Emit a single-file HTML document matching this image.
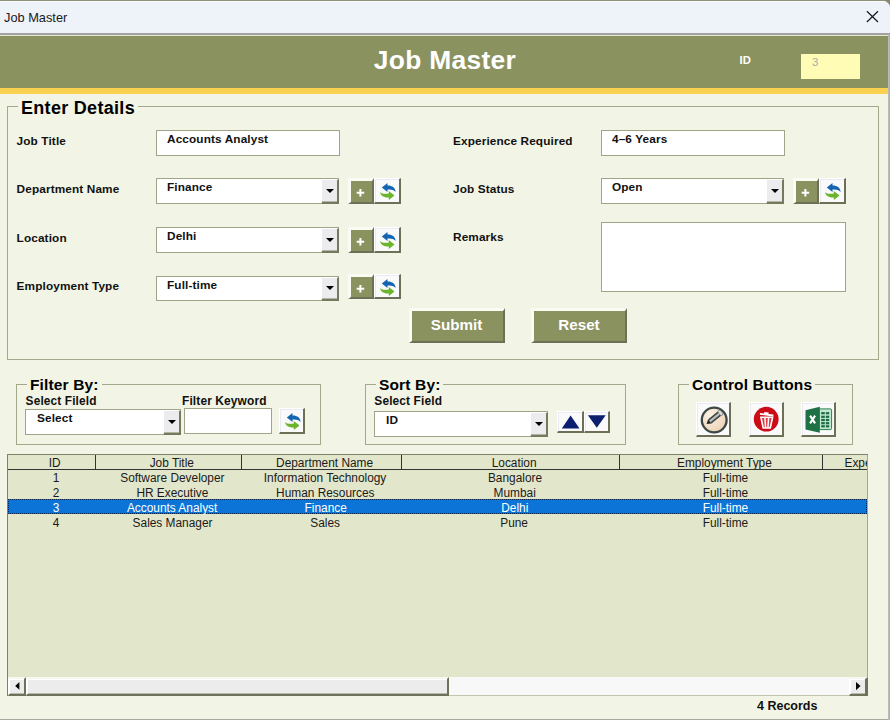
<!DOCTYPE html>
<html><head><meta charset="utf-8">
<style>
*{box-sizing:border-box;margin:0;padding:0}
html,body{width:890px;height:720px;overflow:hidden;background:#f2f4e5;font-family:"Liberation Sans",sans-serif;}
.a{position:absolute}
#titlebar{left:0;top:0;width:890px;height:36px;background:#eef2f9;border-top:1px solid #8d9178;border-bottom:1px solid #e6e8d6;border-top-right-radius:7px;overflow:hidden}
#titlebar:after{content:"";position:absolute;left:0;top:32px;width:890px;height:2px;background:#a2a2a2}
#titlebar:before{content:"";position:absolute;left:0;top:0;width:890px;height:1px;background:#fbfcfe}
#titlebar span{position:absolute;left:4px;top:9px;font-size:12.8px;color:#1a1a1a}
#hdr{left:0;top:36px;width:890px;height:52px;background:#8a9260}
#stripe{left:0;top:88px;width:890px;height:6px;background:#fbd152}
#h1{left:0;top:45px;width:890px;text-align:center;font-weight:bold;font-size:26.4px;color:#fff;letter-spacing:0.3px}
.lbl{font-weight:bold;font-size:11.8px;letter-spacing:0.12px;color:#111;white-space:nowrap}
.frame{border:1px solid #a3a88a}
.cap{letter-spacing:0.15px;background:#f2f4e5;font-weight:bold;color:#000;white-space:nowrap;padding:0 3px}
.tb{background:#fff;border:1px solid #a0a488;font-weight:bold;font-size:11.8px;letter-spacing:0.12px;color:#111;padding:1px 0 0 10px;white-space:nowrap}
.dd{right:-1px;top:0px;bottom:-1px;width:18px;box-shadow:inset 0 -1px 0 #b3b5a4;background:#ececee;border-right:2px solid #77795f;border-bottom:2px solid #77795f;border-left:1px solid #fff;border-top:1px solid #fff}
.dd:after{content:"";position:absolute;left:3.5px;top:9px;border:4px solid transparent;border-top:4px solid #000;border-bottom:0}
.btn{background:#8a9260;border-right:2px solid #6d7056;border-bottom:2px solid #6d7056;border-top:3px solid #fbfbf4;border-left:3px solid #fbfbf4;color:#fff;font-weight:bold;text-align:center}
.ibtn{background:#fafafb;box-shadow:inset 1px 1px 0 #ebe9f4;border-right:2px solid #6d7056;border-bottom:2px solid #6d7056;border-top:1px solid #fff;border-left:1px solid #fff}

#lb{font-size:12.5px;color:#1a1a1a}
#lb .hd{position:absolute;top:0;height:15px;border-right:1px solid #333;border-bottom:1px solid #333;text-align:center;line-height:15px;white-space:nowrap;overflow:hidden}
#lb .c{position:absolute;text-align:center;line-height:15px;height:15px;white-space:nowrap}
#lb .sel{position:absolute;left:0;top:44px;width:859px;height:15px;background:#0b74d6;outline:1px dotted #0c2550;outline-offset:-1px}
.sb{background:#ececec;border-top:2px solid #f7f8f0;border-left:1px solid #fff;border-right:2px solid #6f715a;border-bottom:2px solid #6f715a;box-shadow:inset 1px 1px 0 #fff,inset 0 -1px 0 #b9baaa}
#lb span{display:inline-block;transform:translateX(3.5px) scaleX(0.95)}
#lb .hd span{transform:translate(3.5px,1px) scaleX(0.95)}
.dd8:after{top:8px}
</style></head><body>
<div class="a" style="left:870px;top:0;width:20px;height:10px;background:#85876f"></div>
<div class="a" id="titlebar"><span>Job Master</span>
<svg class="a" style="left:866px;top:10px" width="13" height="12" viewBox="0 0 13 12"><path d="M0.9 0.2L12 11M12 0.2L0.9 11" stroke="#1c1c1c" stroke-width="1.25" fill="none"/></svg></div>
<div class="a" id="hdr"></div><div class="a" id="stripe"></div>
<div class="a" id="h1">Job Master</div>
<div class="a lbl" style="left:739.6px;top:54px;color:#fff;font-size:11.3px">ID</div>
<div class="a" style="left:801px;top:54px;width:59px;height:25px;background:#fffcb6;font-size:11.5px;color:#a9a9a9;padding:2px 0 0 11px">3</div>

<!-- Enter Details frame -->
<div class="a frame" style="left:7px;top:106px;width:872px;height:254px"></div>
<div class="a cap" style="left:18px;top:98px;font-size:18px;letter-spacing:0.3px">Enter Details</div>

<div class="a lbl" style="left:16.6px;top:134px">Job Title</div>
<div class="a tb" style="left:156px;top:130px;width:184px;height:26px">Accounts Analyst</div>
<div class="a lbl" style="left:16.6px;top:182px">Department Name</div>
<div class="a tb" style="left:156px;top:178px;width:183px;height:26px">Finance<div class="a dd"></div></div>
<div class="a lbl" style="left:16.6px;top:231px">Location</div>
<div class="a tb" style="left:156px;top:227px;width:183px;height:26px;padding-top:1px">Delhi<div class="a dd"></div></div>
<div class="a lbl" style="left:16.6px;top:279px">Employment Type</div>
<div class="a tb" style="left:156px;top:276px;width:183px;height:25px;padding-top:1px">Full-time<div class="a dd dd8"></div></div>

<div class="a lbl" style="left:453px;top:134px">Experience Required</div>
<div class="a tb" style="left:601px;top:130px;width:184px;height:26px">4–6 Years</div>
<div class="a lbl" style="left:453px;top:182px">Job Status</div>
<div class="a tb" style="left:601px;top:178px;width:183px;height:26px">Open<div class="a dd"></div></div>
<div class="a lbl" style="left:453px;top:230px">Remarks</div>
<div class="a tb" style="left:601px;top:222px;width:245px;height:70px"></div>

<div class="a btn" style="left:409px;top:308px;width:96px;height:35px;font-size:15.2px;line-height:28px;padding-right:2px">Submit</div>
<div class="a btn" style="left:531px;top:308px;width:96px;height:35px;font-size:15.2px;line-height:28px;padding-right:1px">Reset</div>
<div class="a btn" style="left:348px;top:178px;width:26px;height:26px;font-size:13px;line-height:22px"><svg class="a" style="left:5px;top:7px" width="9" height="9" viewBox="0 0 9 9"><path d="M0.7 3.8H8.2V5.8H0.7ZM3.4 1H5.4V8.5H3.4Z" fill="#fff"/></svg></div><div class="a ibtn" style="left:374px;top:178px;width:27px;height:26px"><svg class="a" style="left:4px;top:2px" width="18" height="20" viewBox="0 0 18 20"><path d="M2.8 6.5L8.5 2V4.6C12.8 4.4 16.2 6.6 16.6 10.9C14.6 8.8 12 8.2 8.5 8.5V11Z" fill="#1565b3"/><path d="M15.5 14.6L9.8 19.1V16.5C5.5 16.7 1.5 15 1 10.9C3 13 6 13 9.8 12.6V10.1Z" fill="#6cb42c"/></svg></div>
<div class="a btn" style="left:348px;top:227px;width:26px;height:26px;font-size:13px;line-height:22px"><svg class="a" style="left:5px;top:7px" width="9" height="9" viewBox="0 0 9 9"><path d="M0.7 3.8H8.2V5.8H0.7ZM3.4 1H5.4V8.5H3.4Z" fill="#fff"/></svg></div><div class="a ibtn" style="left:374px;top:227px;width:27px;height:26px"><svg class="a" style="left:4px;top:2px" width="18" height="20" viewBox="0 0 18 20"><path d="M2.8 6.5L8.5 2V4.6C12.8 4.4 16.2 6.6 16.6 10.9C14.6 8.8 12 8.2 8.5 8.5V11Z" fill="#1565b3"/><path d="M15.5 14.6L9.8 19.1V16.5C5.5 16.7 1.5 15 1 10.9C3 13 6 13 9.8 12.6V10.1Z" fill="#6cb42c"/></svg></div>
<div class="a btn" style="left:348px;top:274px;width:26px;height:25px;font-size:13px;line-height:22px"><svg class="a" style="left:5px;top:7px" width="9" height="9" viewBox="0 0 9 9"><path d="M0.7 3.8H8.2V5.8H0.7ZM3.4 1H5.4V8.5H3.4Z" fill="#fff"/></svg></div><div class="a ibtn" style="left:374px;top:274px;width:27px;height:25px"><svg class="a" style="left:4px;top:2px" width="18" height="20" viewBox="0 0 18 20"><path d="M2.8 6.5L8.5 2V4.6C12.8 4.4 16.2 6.6 16.6 10.9C14.6 8.8 12 8.2 8.5 8.5V11Z" fill="#1565b3"/><path d="M15.5 14.6L9.8 19.1V16.5C5.5 16.7 1.5 15 1 10.9C3 13 6 13 9.8 12.6V10.1Z" fill="#6cb42c"/></svg></div>
<div class="a btn" style="left:793px;top:178px;width:26px;height:26px;font-size:13px;line-height:22px"><svg class="a" style="left:5px;top:7px" width="9" height="9" viewBox="0 0 9 9"><path d="M0.7 3.8H8.2V5.8H0.7ZM3.4 1H5.4V8.5H3.4Z" fill="#fff"/></svg></div><div class="a ibtn" style="left:819px;top:178px;width:27px;height:26px"><svg class="a" style="left:4px;top:2px" width="18" height="20" viewBox="0 0 18 20"><path d="M2.8 6.5L8.5 2V4.6C12.8 4.4 16.2 6.6 16.6 10.9C14.6 8.8 12 8.2 8.5 8.5V11Z" fill="#1565b3"/><path d="M15.5 14.6L9.8 19.1V16.5C5.5 16.7 1.5 15 1 10.9C3 13 6 13 9.8 12.6V10.1Z" fill="#6cb42c"/></svg></div>

<!-- Filter By -->
<div class="a frame" style="left:16px;top:384px;width:305px;height:61px"></div>
<div class="a cap" style="left:27px;top:376px;font-size:15.5px">Filter By:</div>
<div class="a lbl" style="left:25.6px;top:394px;font-size:11.9px">Select Fileld</div>
<div class="a lbl" style="left:182px;top:394px;font-size:11.95px">Filter Keyword</div>
<div class="a tb" style="left:25px;top:409px;width:156px;height:26px;padding-top:1px;padding-left:11px">Select<div class="a dd"></div></div>
<div class="a tb" style="left:184px;top:408px;width:88px;height:26px"></div>
<div class="a ibtn" style="left:279px;top:408px;width:26px;height:26px"><svg class="a" style="left:4px;top:2px" width="18" height="20" viewBox="0 0 18 20"><path d="M2.8 6.5L8.5 2V4.6C12.8 4.4 16.2 6.6 16.6 10.9C14.6 8.8 12 8.2 8.5 8.5V11Z" fill="#1565b3"/><path d="M15.5 14.6L9.8 19.1V16.5C5.5 16.7 1.5 15 1 10.9C3 13 6 13 9.8 12.6V10.1Z" fill="#6cb42c"/></svg></div>
<!-- Sort By -->
<div class="a frame" style="left:365px;top:384px;width:261px;height:61px"></div>
<div class="a cap" style="left:376px;top:376px;font-size:15.5px">Sort By:</div>
<div class="a lbl" style="left:374.3px;top:394px;font-size:11.95px">Select Field</div>
<div class="a tb" style="left:374px;top:411px;width:174px;height:26px;padding-top:1px;padding-left:11px">ID<div class="a dd"></div></div>
<div class="a ibtn" style="left:557px;top:411px;width:27px;height:22px"><svg class="a" style="left:0;top:0" width="24" height="19"><path d="M12.6 3.5L21.5 16.4H3.8Z" fill="#0c1f6e"/></svg></div>
<div class="a ibtn" style="left:584px;top:411px;width:26px;height:22px"><svg class="a" style="left:0;top:0" width="24" height="19"><path d="M2.9 3.2H20.7L11.8 15.7Z" fill="#0c1f6e"/></svg></div>
<!-- Control Buttons -->
<div class="a frame" style="left:678px;top:384px;width:175px;height:61px"></div>
<div class="a cap" style="left:689px;top:376px;font-size:15.5px">Control Buttons</div>
<div class="a ibtn" style="left:696px;top:402px;width:35px;height:35px"><svg class="a" style="left:0;top:1px" width="32" height="31" viewBox="0 0 32 31"><defs><radialGradient id="pg" cx="0.35" cy="0.3" r="0.8"><stop offset="0" stop-color="#fbf1e4"/><stop offset="1" stop-color="#ecd0b2"/></radialGradient></defs><circle cx="17.2" cy="16" r="12.4" fill="url(#pg)" stroke="#3b4844" stroke-width="2.3"/><path d="M9.60 20.00L14.56 19.46L11.17 15.26Z" fill="#262626"/><path d="M14.56 19.46L11.17 15.26L22.90 5.80L26.30 10.00Z" fill="#3f4442"/><path d="M12.87 17.36L24.60 7.90" stroke="#b9bfbe" stroke-width="2.2"/><path d="M20.57 7.68L22.90 5.80L26.30 10.00L23.96 11.89Z" fill="#dcdcdc" stroke="#555" stroke-width="0.5"/></svg></div>
<div class="a ibtn" style="left:749px;top:402px;width:35px;height:35px"><svg class="a" style="left:0;top:1px" width="32" height="31" viewBox="0 0 32 31"><circle cx="16.2" cy="15.2" r="12.4" fill="#cb0b16"/><path d="M9.9 9.9L23.4 11.5M14.2 8.9L18.6 9.4" stroke="#fff" stroke-width="1.8" fill="none"/><path d="M10.9 13.2H22.6L20.3 24H13.2Z" fill="#dc3c46" stroke="#fff" stroke-width="1.6"/><path d="M14.9 13.5L15.6 23.7M18.6 13.5L17.9 23.7" stroke="#fff" stroke-width="1.5"/></svg></div>
<div class="a ibtn" style="left:801px;top:402px;width:35px;height:35px"><svg class="a" style="left:0px;top:1px" width="32" height="31" viewBox="0 0 32 31"><rect x="17" y="4.9" width="12.6" height="20.7" rx="1.2" fill="#bfe8d0" stroke="#2a7d50" stroke-width="1"/><g fill="#1e6b43"><rect x="19.2" y="8.1" width="3.6" height="2.2"/><rect x="23.8" y="8.1" width="3.4" height="2.2"/><rect x="19.2" y="11.7" width="3.6" height="2.2"/><rect x="23.8" y="11.7" width="3.4" height="2.2"/><rect x="19.2" y="14.9" width="3.6" height="2.2"/><rect x="23.8" y="14.9" width="3.4" height="2.2"/><rect x="19.2" y="18.1" width="3.6" height="2.2"/><rect x="23.8" y="18.1" width="3.4" height="2.2"/><rect x="19.2" y="21.2" width="3.6" height="2.2"/><rect x="23.8" y="21.2" width="3.4" height="2.2"/></g><path d="M3.5 6.3L17.8 2.7V28.8L3.5 25.6Z" fill="#1e7145"/><path d="M8.1 11.7L13.1 19.3M13.1 11.7L8.1 19.3" stroke="#fff" stroke-width="2.1"/></svg></div>

<!-- Listbox -->
<div class="a" id="lb" style="left:7px;top:454px;width:861px;height:242px;background:#e2e6cb;border:1px solid #7f826a;border-right:0;border-bottom:0;overflow:hidden">
<div class="hd" style="left:0px;width:88px"><span>ID</span></div><div class="hd" style="left:88px;width:146px"><span>Job Title</span></div><div class="hd" style="left:234px;width:160px"><span>Department Name</span></div><div class="hd" style="left:394px;width:218px"><span>Location</span></div><div class="hd" style="left:612px;width:203px"><span>Employment Type</span></div><div class="hd" style="left:815px;width:60px;text-align:left;padding-left:18px;border-right:0"><span style="transform-origin:0 50%">Experience Required</span></div>
<div class="sel"></div>
<div class="c" style="left:0px;width:88px;top:16px;color:#1a1a1a"><span>1</span></div><div class="c" style="left:88px;width:146px;top:16px;color:#1a1a1a"><span>Software Developer</span></div><div class="c" style="left:234px;width:160px;top:16px;color:#1a1a1a"><span>Information Technology</span></div><div class="c" style="left:394px;width:218px;top:16px;color:#1a1a1a"><span>Bangalore</span></div><div class="c" style="left:612px;width:203px;top:16px;color:#1a1a1a"><span>Full-time</span></div>
<div class="c" style="left:0px;width:88px;top:31px;color:#1a1a1a"><span>2</span></div><div class="c" style="left:88px;width:146px;top:31px;color:#1a1a1a"><span>HR Executive</span></div><div class="c" style="left:234px;width:160px;top:31px;color:#1a1a1a"><span>Human Resources</span></div><div class="c" style="left:394px;width:218px;top:31px;color:#1a1a1a"><span>Mumbai</span></div><div class="c" style="left:612px;width:203px;top:31px;color:#1a1a1a"><span>Full-time</span></div>
<div class="c" style="left:0px;width:88px;top:46px;color:#fff"><span>3</span></div><div class="c" style="left:88px;width:146px;top:46px;color:#fff"><span>Accounts Analyst</span></div><div class="c" style="left:234px;width:160px;top:46px;color:#fff"><span>Finance</span></div><div class="c" style="left:394px;width:218px;top:46px;color:#fff"><span>Delhi</span></div><div class="c" style="left:612px;width:203px;top:46px;color:#fff"><span>Full-time</span></div>
<div class="c" style="left:0px;width:88px;top:61px;color:#1a1a1a"><span>4</span></div><div class="c" style="left:88px;width:146px;top:61px;color:#1a1a1a"><span>Sales Manager</span></div><div class="c" style="left:234px;width:160px;top:61px;color:#1a1a1a"><span>Sales</span></div><div class="c" style="left:394px;width:218px;top:61px;color:#1a1a1a"><span>Pune</span></div><div class="c" style="left:612px;width:203px;top:61px;color:#1a1a1a"><span>Full-time</span></div>
<div class="a" style="left:859px;top:0;width:1px;height:222px;background:#a6a894"></div>
<div class="a" style="left:0;top:222px;width:860px;height:19px;background:#f8f8f8;border-bottom:1px solid #c3c6ad"></div>
<div class="a sb" style="left:0;top:222px;width:18px;height:19px"><svg class="a" style="left:5.8px;top:3.4px" width="5" height="8"><path d="M4.4 0V7.8L0.2 3.9Z" fill="#000"/></svg></div>
<div class="a sb" style="left:18px;top:222px;width:423px;height:19px"></div>
<div class="a sb" style="left:841px;top:222px;width:19px;height:19px;border-right-width:3px"><svg class="a" style="left:5.8px;top:3.2px" width="5" height="9"><path d="M0 0V8.2L4.5 4.1Z" fill="#000"/></svg></div>
</div>
<div class="a" style="left:757px;top:699px;font-weight:bold;font-size:12.5px;color:#111">4 Records</div>
<div class="a" style="left:0;top:719px;width:890px;height:1px;background:#a7a8a0"></div>
<div class="a" style="left:888px;top:34px;width:2px;height:686px;background:linear-gradient(90deg,#c4c5bc,#a3a49c)"></div>
</body></html>
